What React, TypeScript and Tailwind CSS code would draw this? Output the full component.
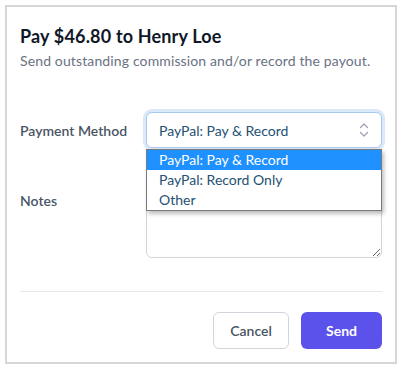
import React from 'react'

const font = { fontFamily: 'Lato, "Open Sans", Arial, sans-serif' }

function Chevrons() {
  return (
    <svg width="10" height="16" viewBox="0 0 10 16" fill="none" stroke="#9ca3af" strokeWidth="1.3" strokeLinecap="round" strokeLinejoin="round">
      <path d="M1.5 5.5 L5 2 L8.5 5.5" />
      <path d="M1.5 10.5 L5 14 L8.5 10.5" />
    </svg>
  )
}

export default function App() {
  const options = ['PayPal: Pay & Record', 'PayPal: Record Only', 'Other']

  return (
    <div className="bg-white p-[5px] w-[403px] h-[371px]" style={font}>
      <div className="w-[392px] h-[359px] border-2 border-[#d6d6d6] bg-white px-[13px] pt-[15px]">
        <h2 className="text-[18px] leading-7 font-bold text-gray-900 whitespace-nowrap tracking-[0.17px]">Pay $46.80 to Henry Loe</h2>
        <p className="text-[14px] leading-5 text-gray-500 mt-[1px] whitespace-nowrap tracking-[0.13px]">
          Send outstanding commission and/or record the payout.
        </p>

        <div className="mt-[41px] flex flex-col gap-[32px]">
          <div className="flex items-center">
            <label className="w-[126px] text-[14px] font-semibold text-gray-600">Payment Method</label>
            <div className="relative flex-1">
              <div className="flex h-[36px] items-center justify-between rounded-md border border-[#a9c9ee] px-3 ring-[3px] ring-[#dbe8f8] bg-white">
                <span className="text-[14px] text-[#245173]">PayPal: Pay &amp; Record</span>
                <Chevrons />
              </div>
              <div className="absolute left-0 right-0 top-[37px] z-10 border border-[#7a7a7a] bg-white shadow-[2px_3px_4px_rgba(0,0,0,0.25)]">
                {options.map((o, i) => (
                  <div
                    key={o}
                    className={
                      i === 0
                        ? 'h-[20px] leading-[20px] pl-3 text-[14px] bg-[#1e90ff] text-white'
                        : 'h-[20px] leading-[20px] pl-3 text-[14px] text-[#245173]'
                    }
                  >
                    {o}
                  </div>
                ))}
              </div>
            </div>
          </div>

          <div className="flex items-start">
            <label className="w-[126px] pt-[10px] text-[14px] font-semibold text-gray-600">Notes</label>
            <textarea className="flex-1 h-[78px] rounded-md border border-gray-300 px-3 py-2 text-[14px] outline-none" />
          </div>
        </div>

        <div className="mt-[33px] border-t border-gray-200" />

        <div className="mt-[20px] flex justify-end gap-3">
          <button className="h-[37px] w-[76px] rounded-md border border-gray-300 bg-white text-[14px] font-semibold text-gray-600">
            Cancel
          </button>
          <button className="h-[37px] w-[81px] rounded-md bg-[#5a52ea] text-[14px] font-bold text-white">
            Send
          </button>
        </div>
      </div>
    </div>
  )
}
